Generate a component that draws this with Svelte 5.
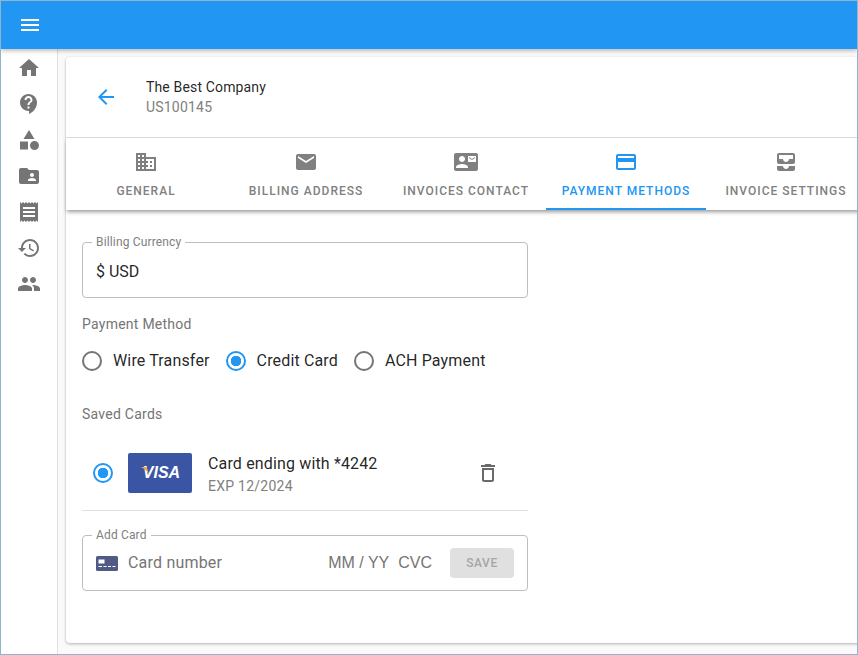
<script>
  const icons = {
    menu: 'M3 18h18v-2H3v2zm0-5h18v-2H3v2zm0-7v2h18V6H3z',
    home: 'M10 20v-6h4v6h5v-8h3L12 3 2 12h3v8z',
    support: 'M11.5 2C6.81 2 3 5.81 3 10.5S6.81 19 11.5 19h.5v3c4.86-2.34 8-6.57 8-11.5C20 5.81 16.19 2 11.5 2zm1 14.5h-2v-2h2v2zm0-3.5h-2c0-3.25 3-3 3-5 0-1.1-.9-2-2-2s-2 .9-2 2h-2c0-2.21 1.79-4 4-4s4 1.79 4 4c0 2.5-3 2.75-3 5z',
    category: 'M12 2l-5.5 9h11zM17.5 13a4.5 4.5 0 1 0 0 9 4.5 4.5 0 0 0 0-9zM3 13.5h8v8H3z',
    folder: 'M20 6h-8l-2-2H4c-1.1 0-1.99.9-1.99 2L2 18c0 1.1.9 2 2 2h16c1.1 0 2-.9 2-2V8c0-1.1-.9-2-2-2zm-5 3c1.1 0 2 .9 2 2s-.9 2-2 2-2-.9-2-2 .9-2 2-2zm4 8h-8v-1c0-1.33 2.67-2 4-2s4 .67 4 2v1z',
    receipt: 'M18 17H6v-2h12v2zm0-4H6v-2h12v2zm0-4H6V7h12v2zM3 22l1.5-1.5L6 22l1.5-1.5L9 22l1.5-1.5L12 22l1.5-1.5L15 22l1.5-1.5L18 22l1.5-1.5L21 22V2l-1.5 1.5L18 2l-1.5 1.5L15 2l-1.5 1.5L12 2l-1.5 1.5L9 2 7.5 3.5 6 2 4.5 3.5 3 2v20z',
    history: 'M13 3c-4.97 0-9 4.03-9 9H1l3.89 3.89.07.14L9 12H6c0-3.87 3.13-7 7-7s7 3.13 7 7-3.13 7-7 7c-1.93 0-3.68-.79-4.94-2.06l-1.42 1.42C8.27 19.99 10.51 21 13 21c4.97 0 9-4.03 9-9s-4.03-9-9-9zm-1 5v5l4.28 2.54.72-1.21-3.5-2.08V8H12z',
    people: 'M16 11c1.66 0 2.99-1.34 2.99-3S17.66 5 16 5c-1.66 0-3 1.34-3 3s1.34 3 3 3zm-8 0c1.66 0 2.99-1.34 2.99-3S9.66 5 8 5C6.34 5 5 6.34 5 8s1.34 3 3 3zm0 2c-2.33 0-7 1.17-7 3.5V19h14v-2.5c0-2.33-4.67-3.5-7-3.5zm8 0c-.29 0-.62.02-.97.05 1.16.84 1.97 1.97 1.97 3.45V19h6v-2.5c0-2.33-4.67-3.5-7-3.5z',
    domain: 'M12 7V3H2v18h20V7H12zM6 19H4v-2h2v2zm0-4H4v-2h2v2zm0-4H4V9h2v2zm0-4H4V5h2v2zm4 12H8v-2h2v2zm0-4H8v-2h2v2zm0-4H8V9h2v2zm0-4H8V5h2v2zm10 12h-8v-2h2v-2h-2v-2h2v-2h-2V9h8v10zm-2-8h-2v2h2v-2zm0 4h-2v2h2v-2z',
    email: 'M20 4H4c-1.1 0-1.99.9-1.99 2L2 18c0 1.1.9 2 2 2h16c1.1 0 2-.9 2-2V6c0-1.1-.9-2-2-2zm0 4l-8 5-8-5V6l8 5 8-5v2z',
    contact: 'M21 8V7l-3 2-3-2v1l3 2 3-2zm1-5H2C.9 3 0 3.9 0 5v14c0 1.1.9 2 2 2h20c1.1 0 1.99-.9 1.99-2L24 5c0-1.1-.9-2-2-2zM8 6c1.66 0 3 1.34 3 3s-1.34 3-3 3-3-1.34-3-3 1.34-3 3-3zm6 12H2v-1c0-2 4-3.1 6-3.1s6 1.1 6 3.1v1zm8-6h-8V6h8v6z',
    card: 'M20 4H4c-1.11 0-1.99.89-1.99 2L2 18c0 1.11.89 2 2 2h16c1.11 0 2-.89 2-2V6c0-1.11-.89-2-2-2zm0 14H4v-6h16v6zm0-10H4V6h16v2z',
    inbox: 'M19 3H5c-1.1 0-2 .9-2 2v7c0 1.1.9 2 2 2h14c1.1 0 2-.9 2-2V5c0-1.1-.9-2-2-2zm0 6h-4c0 1.62-1.38 3-3 3s-3-1.38-3-3H5V5h14v4zm-4 7h6v3c0 1.1-.9 2-2 2H5c-1.1 0-2-.9-2-2v-3h6c0 1.66 1.34 3 3 3s3-1.34 3-3z',
    del: 'M6 19c0 1.1.9 2 2 2h8c1.1 0 2-.9 2-2V7H6v12zM8 9h8v10H8V9zm7.5-5l-1-1h-5l-1 1H5v2h14V4z',
    back: 'M20 11H7.83l5.59-5.59L12 4l-8 8 8 8 1.41-1.41L7.83 13H20v-2z'
  };
  const nav = ['home', 'support', 'category', 'folder', 'receipt', 'history', 'people'];
  const tabs = [
    { icon: 'domain', label: 'GENERAL' },
    { icon: 'email', label: 'BILLING ADDRESS' },
    { icon: 'contact', label: 'INVOICES CONTACT' },
    { icon: 'card', label: 'PAYMENT METHODS', active: true },
    { icon: 'inbox', label: 'INVOICE SETTINGS' }
  ];
  const methods = [
    { label: 'Wire Transfer' },
    { label: 'Credit Card', on: true },
    { label: 'ACH Payment' }
  ];
</script>

{#snippet icon(name)}
  <svg class="icon" viewBox="0 0 24 24" aria-hidden="true"><path d={icons[name]} /></svg>
{/snippet}

<div class="frame">
  <header class="bar">
    <button class="menu" aria-label="Menu">{@render icon('menu')}</button>
  </header>
  <div class="body">
    <nav class="side">
      {#each nav as n}
        <div class="side-item">{@render icon(n)}</div>
      {/each}
    </nav>
    <main class="main">
      <section class="card">
        <div class="head">
          <span class="back">{@render icon('back')}</span>
          <div>
            <div class="company">The Best Company</div>
            <div class="code">US100145</div>
          </div>
        </div>
        <div class="tabs">
          {#each tabs as t}
            <div class="tab" class:active={t.active}>
              {@render icon(t.icon)}
              <span>{t.label}</span>
            </div>
          {/each}
        </div>
        <div class="content">
          <fieldset class="field currency">
            <legend>Billing Currency</legend>
            <div class="value">$ USD</div>
          </fieldset>
          <div class="label pm">Payment Method</div>
          <div class="radios">
            {#each methods as m}
              <label class="radio-row">
                <span class="radio" class:on={m.on}></span>
                <span>{m.label}</span>
              </label>
            {/each}
          </div>
          <div class="label saved">Saved Cards</div>
          <div class="saved-row">
            <span class="radio on"></span>
            <div class="visa">
              <span>VISA</span>
              <svg class="swoosh" viewBox="0 0 8 7" aria-hidden="true"><path d="M0 0h5.5L8 7 6.5 5.2C5 3.2 3 1.5 0 0z" /></svg>
            </div>
            <div class="card-text">
              <div class="ending">Card ending with *4242</div>
              <div class="exp">EXP 12/2024</div>
            </div>
            <span class="trash">{@render icon('del')}</span>
          </div>
          <fieldset class="field add">
            <legend>Add Card</legend>
            <div class="add-row">
              <svg class="cc" viewBox="0 0 22 15" aria-hidden="true">
                <rect width="22" height="15" rx="1.5" fill="#4f5b85" />
                <rect x="2.5" y="3.5" width="6" height="4" fill="#fff" />
                <path d="M2.5 10.5h3.5M7.5 10.5h3M12 10.5h3M16.5 10.5h3" stroke="#fff" stroke-width="1.2" fill="none" />
              </svg>
              <span class="ph num">Card number</span>
              <span class="ph date">MM / YY</span>
              <span class="ph cvc">CVC</span>
              <button class="save" disabled>SAVE</button>
            </div>
          </fieldset>
        </div>
      </section>
    </main>
  </div>
</div>

<style>
  :global(body) { margin: 0; }
  .frame {
    box-sizing: border-box; width: 858px; height: 655px; overflow: hidden;
    border: 1px solid #8fb6cc; display: flex; flex-direction: column;
    font-family: Roboto, sans-serif; background: #fafafa; color: rgba(0,0,0,.87);
  }
  .icon { width: 24px; height: 24px; fill: currentColor; display: block; }
  .bar {
    height: 48px; flex: none; background: #2196f3; display: flex; align-items: center;
    padding-left: 17px; box-shadow: 0 2px 4px rgba(0,0,0,.25); position: relative; z-index: 2;
  }
  .menu { all: unset; color: #fff; display: block; }
  .body { flex: 1; display: flex; min-height: 0; }
  .side {
    width: 57px; flex: none; box-sizing: border-box; background: #fff; border-right: 1px solid #e0e0e0;
    color: #757575; padding-top: 1px; display: flex; flex-direction: column;
  }
  .side-item { height: 36px; display: flex; justify-content: center; align-items: center; padding-right: 1px; }
  .main { flex: 1; min-width: 0; padding: 8px 0 11px 8px; display: flex; }
  .card {
    width: 808px; flex: none; background: #fff; border-radius: 4px;
    box-shadow: 0 1px 3px rgba(0,0,0,.3); display: flex; flex-direction: column;
  }
  .head {
    height: 81px; flex: none; box-sizing: border-box; border-bottom: 1px solid #dcdcdc;
    display: flex; align-items: center;
  }
  .back { color: #2196f3; margin-left: 28px; margin-right: 28px; }
  .company { font-size: 14px; line-height: 20px; letter-spacing: .15px; }
  .code { font-size: 14px; line-height: 20px; color: #808080; letter-spacing: .2px; }
  .tabs {
    display: flex; height: 72px; flex: none; box-sizing: border-box;
    box-shadow: 0 3px 4px -1px rgba(0,0,0,.4); position: relative;
  }
  .tab {
    width: 160px; flex: none; box-sizing: border-box; display: flex; flex-direction: column; align-items: center;
    color: #808080; padding-top: 12px; font-size: 12px; font-weight: 500; letter-spacing: 1px;
    height: 72px;
  }
  .tab span { margin-top: 9px; line-height: 16px; white-space: nowrap; }
  .tab.active { color: #2196f3; border-bottom: 2px solid #2196f3; }
  .content { padding: 26px 16px 0; width: 446px; }
  .field { margin: 0; padding: 0; border: 1px solid #bdbdbd; border-radius: 4px; box-sizing: border-box; }
  .field legend {
    margin-left: 9px; padding: 0 4px; font-size: 12px; line-height: 12px; color: #808080; letter-spacing: .15px;
  }
  .currency { height: 62px; }
  .value { padding: 14px 13px 12px; font-size: 16px; line-height: 20px; }
  .label { font-size: 14px; font-weight: 400; line-height: 16px; color: #757575; letter-spacing: .25px; }
  .pm { margin-top: 18px; }
  .radios { display: flex; margin-top: 19px; }
  .radio-row { display: flex; align-items: center; gap: 11px; font-size: 16px; line-height: 20px; letter-spacing: .15px; margin-right: 16px; }
  .radio {
    width: 20px; height: 20px; box-sizing: border-box; border: 2px solid #757575; border-radius: 50%; flex: none; display: block;
  }
  .radio.on { border-color: #2196f3; background: radial-gradient(circle, #2196f3 0 5px, transparent 5.5px); }
  .saved { margin-top: 35px; }
  .saved-row {
    display: flex; align-items: center; height: 76px; box-sizing: border-box; margin-top: 13px;
    border-bottom: 1px solid #e0e0e0; padding-left: 11px;
  }
  .visa {
    margin-left: 15px; width: 64px; height: 40px; box-sizing: border-box; background: #3b55a5; border-radius: 2px;
    color: #fff; display: flex; align-items: center; justify-content: center; position: relative;
    font: italic 700 16px "Liberation Sans", sans-serif; padding-left: 3px;
  }
  .swoosh { position: absolute; left: 13px; top: 14px; width: 8px; height: 7px; fill: #f2a73b; }
  .card-text { margin-left: 16px; flex: 1; padding-top: 3px; }
  .ending { font-size: 16px; line-height: 22px; letter-spacing: .15px; }
  .exp { font-size: 14px; line-height: 18px; color: #808080; margin-top: 2px; letter-spacing: .25px; }
  .trash { color: #6a6a6a; margin-right: 28px; }
  .add { margin-top: 18px; height: 62px; }
  .add-row { display: flex; align-items: center; height: 32px; margin-top: 6px; padding-left: 13px; }
  .cc { width: 22px; height: 15px; flex: none; }
  .ph { font-size: 16px; color: #757575; padding-bottom: 1px; }
  .num { margin-left: 10px; flex: 1; letter-spacing: .2px; }
  .date { font-family: "Liberation Sans", sans-serif; }
  .cvc { font-family: "Liberation Sans", sans-serif; margin-left: 9px; }
  .save {
    margin: 0 13px 0 18px; width: 64px; height: 30px; border: 0; border-radius: 4px; background: #e0e0e0;
    color: #a6a6a6; font: 500 12px Roboto, sans-serif; letter-spacing: .6px;
  }
</style>
